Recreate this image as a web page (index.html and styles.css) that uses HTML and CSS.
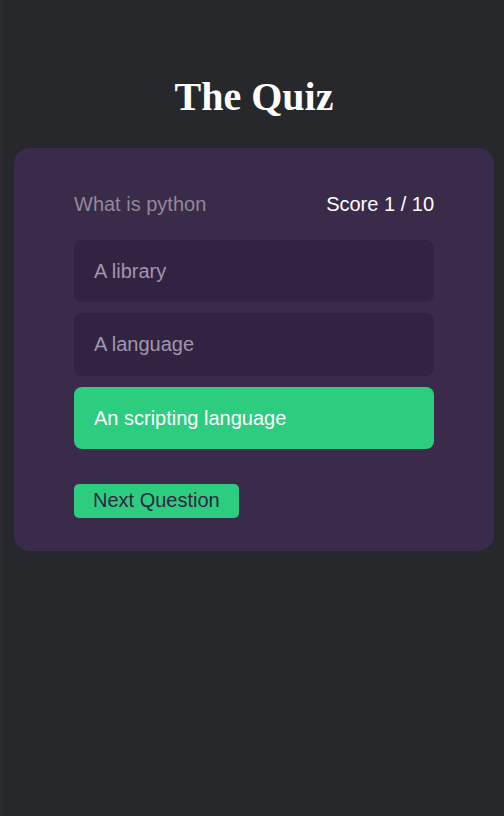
FILE: index.html
```html
<!DOCTYPE html>
<html lang="en">
<head>
<meta charset="utf-8">
<title>The Quiz</title>
<link rel="stylesheet" href="styles.css">
</head>
<body>
  <h1 class="title">The Quiz</h1>
  <main class="card">
    <div class="head">
      <span class="question">What is python</span>
      <span class="score">Score 1 / 10</span>
    </div>
    <div class="options">
      <div class="option">A library</div>
      <div class="option">A language</div>
      <div class="option selected">An scripting language</div>
    </div>
    <button class="next">Next Question</button>
  </main>
</body>
</html>
```

FILE: styles.css
```css
html, body {
  margin: 0;
  background: #27282c;
}
body {
  min-height: 816px;
  box-sizing: border-box;
  border-left: 3px solid #2c2c30;
  padding-left: 1px;
  font-family: "Liberation Sans", Arial, sans-serif;
}
.title {
  margin: 74px 0 0;
  text-align: center;
  font-family: "Liberation Serif", "Times New Roman", serif;
  font-weight: bold;
  font-size: 40px;
  line-height: 46px;
  color: #ffffff;
}
.card {
  width: 480px;
  box-sizing: border-box;
  margin: 28px auto 0;
  padding: 44px 60px 33px;
  background: #3a2b4b;
  border-radius: 16px;
  display: flex;
  flex-direction: column;
  align-items: flex-start;
}
.head {
  width: 100%;
  display: flex;
  justify-content: space-between;
  font-size: 20px;
  line-height: 24px;
}
.question { color: #8f8a96; }
.score { color: #ffffff; }
.options {
  width: 100%;
  margin-top: 24px;
  display: flex;
  flex-direction: column;
  gap: 11px;
}
.option {
  height: 62.4px;
  box-sizing: border-box;
  padding: 20px 20px 19px;
  background: #312341;
  border-radius: 8px;
  color: #a296ae;
  font-size: 20px;
  line-height: 23px;
}
.option.selected {
  background: #2dcd7f;
  color: #ffffff;
}
.next {
  margin-top: 35px;
  height: 34px;
  padding: 5px 19px 6px;
  border: none;
  border-radius: 5px;
  background: #2dcd7f;
  color: #2e2540;
  font-family: "Liberation Sans", Arial, sans-serif;
  font-size: 20px;
  line-height: 23px;
}
```
